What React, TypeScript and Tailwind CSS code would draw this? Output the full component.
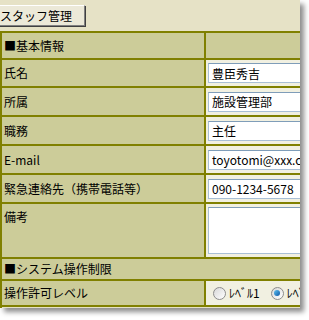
const labelFont = { fontFamily: '"MS UI Gothic", "Noto Sans CJK JP", sans-serif' };

function Row({ label, h, children, span }: { label: string; h: string; children?: React.ReactNode; span?: boolean }) {
  if (span) {
    return (
      <div className={`flex ${h} items-center border-b-2 border-[#808000] bg-[#cccc99] pl-[2px]`}>
        {label}
      </div>
    );
  }
  return (
    <div className={`flex ${h} border-b-2 border-[#808000]`}>
      <div className="flex w-[204px] shrink-0 items-center whitespace-nowrap border-r-2 border-[#808000] bg-[#cccc99] pl-[2px]">{label}</div>
      <div className="flex min-w-0 flex-1 items-center overflow-hidden bg-[#f1f0e1] pl-[2px]">{children}</div>
    </div>
  );
}

function Field({ value }: { value: string }) {
  return (
    <div className="flex h-[20px] w-[200px] shrink-0 items-center whitespace-nowrap border border-[#a9bfd6] border-t-[#7f9db9] bg-white pl-[3px] pt-[1px] text-[12px] text-black">
      {value}
    </div>
  );
}

function Radio({ checked }: { checked?: boolean }) {
  return (
    <span className="flex h-[13px] w-[13px] shrink-0 items-center justify-center rounded-full border border-[#8c8c8c] bg-gradient-to-br from-[#d8d8d8] to-white">
      {checked && <span className="h-[6px] w-[6px] rounded-full bg-gradient-to-br from-[#5fc1f0] to-[#0a58a6]" />}
    </span>
  );
}

export default function App() {
  return (
    <div className="h-[320px] w-[309px] overflow-hidden bg-white">
      <div
        className="flex h-[308px] w-[300px] flex-col overflow-hidden bg-[#e6e2c6] text-[12px] text-black shadow-[4px_4px_5px_rgba(0,0,0,0.45)]"
        style={labelFont}
      >
        <div className="h-[31px] shrink-0 pt-[5px]">
          <div className="ml-[-3px] flex h-[21px] w-[88px] items-center whitespace-nowrap border border-white border-b-[#808080] border-r-[#808080] bg-[#ece9d8] pl-[2px] shadow-[1px_1px_0_#404040]">
            スタッフ管理
          </div>
        </div>
        <div className="flex-1 border-l-2 border-t-2 border-[#808000]">
          <div className="flex h-[27px] border-b-2 border-[#808000]">
            <div className="flex w-[204px] shrink-0 items-center border-r-2 border-[#808000] bg-[#cccc99] pl-[2px]">■基本情報</div>
            <div className="flex-1 bg-[#cccc99]" />
          </div>
          <Row label="氏名" h="h-[28px]"><Field value="豊臣秀吉" /></Row>
          <Row label="所属" h="h-[29px]"><Field value="施設管理部" /></Row>
          <Row label="職務" h="h-[29px]"><Field value="主任" /></Row>
          <Row label="E-mail" h="h-[29px]"><Field value="toyotomi@xxx.com" /></Row>
          <Row label="緊急連絡先（携帯電話等）" h="h-[29px]"><Field value="090-1234-5678" /></Row>
          <div className="flex h-[55px] border-b-2 border-[#808000]">
            <div className="w-[204px] shrink-0 border-r-2 border-[#808000] bg-[#cccc99] pl-[2px] pt-[4px]">備考</div>
            <div className="min-w-0 flex-1 overflow-hidden bg-[#f1f0e1] pl-[2px] pt-[3px]">
              <div className="h-[47px] w-[200px] border border-[#a9bfd6] border-t-[#7f9db9] bg-white" />
            </div>
          </div>
          <Row label="■システム操作制限" h="h-[22px]" span />
          <div className="flex h-[26px] border-b-2 border-[#808000]">
            <div className="flex w-[204px] shrink-0 items-center whitespace-nowrap border-r-2 border-[#808000] bg-[#cccc99] pl-[2px]">操作許可レベル</div>
            <div className="flex min-w-0 flex-1 items-center gap-[3px] overflow-hidden whitespace-nowrap bg-[#f1f0e1] pl-[7px]">
              <Radio />
              <span className="mr-[8px] shrink-0">ﾚﾍﾞﾙ1</span>
              <Radio checked />
              <span className="shrink-0">ﾚﾍﾞﾙ2</span>
            </div>
          </div>
        </div>
      </div>
    </div>
  );
}
